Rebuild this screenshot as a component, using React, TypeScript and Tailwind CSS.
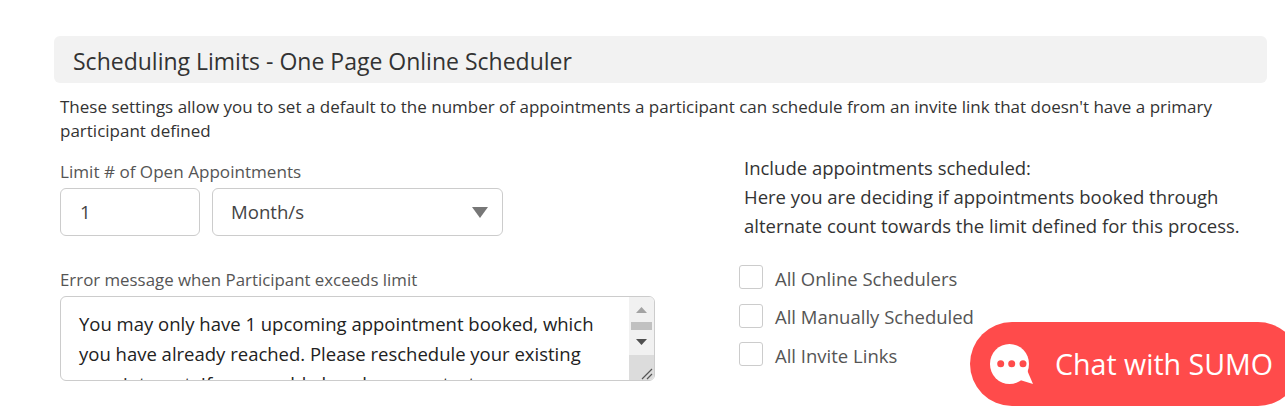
import React from 'react';

const font = { fontFamily: '"Open Sans", sans-serif' };

const ChatIcon = () => (
  <svg width="43" height="40" viewBox="0 0 43 40" className="shrink-0">
    <ellipse cx="19.500" cy="20" rx="19.500" ry="20" fill="#fff" />
    <path d="M37 26L43 40 30 36z" fill="#fff" />
    <circle cx="10.700" cy="19.700" r="3.500" fill="#ff4b4b" />
    <circle cx="21.700" cy="19.700" r="3.500" fill="#ff4b4b" />
    <circle cx="33" cy="19.700" r="3.500" fill="#ff4b4b" />
  </svg>
);

const checks = ['All Online Schedulers', 'All Manually Scheduled', 'All Invite Links'];

export default function App() {
  return (
    <div style={font} className="relative w-[1285px] h-[411px] overflow-hidden bg-white">
      <div className="pl-[54px] pr-[18px] pt-[36px]">
        <div className="h-[47px] flex items-center pl-[19px] pt-[3px] bg-[#f2f2f2] rounded-[6px] text-[23px] text-[#333]">
          Scheduling Limits - One Page Online Scheduler
        </div>
        <p className="ml-[6px] mt-[12px] w-[1180px] text-[17px] leading-[24px] text-[#333]">
          These settings allow you to set a default to the number of appointments a participant can schedule from an invite link that doesn't have a primary participant defined
        </p>
        <div className="flex mt-[17px]">
          <div className="ml-[6px] w-[684px]">
            <div className="text-[17.1px] leading-[24px] text-[#555]">Limit # of Open Appointments</div>
            <div className="flex gap-[12px] mt-[4px]">
              <div className="w-[140px] h-[48px] border border-[#ccc] rounded-[6px] flex items-center pl-[19px] text-[18.6px] text-[#444]">1</div>
              <div className="w-[291px] h-[48px] border border-[#ccc] rounded-[6px] flex items-center justify-between pl-[18px] pr-[14px] text-[18.6px] text-[#444]">
                Month/s
                <svg width="16" height="11" viewBox="0 0 16 11"><path d="M0 0h16l-8 11z" fill="#777" /></svg>
              </div>
            </div>
            <div className="mt-[32px] text-[16.85px] leading-[24px] text-[#555]">Error message when Participant exceeds limit</div>
            <div className="relative mt-[4px] w-[595px] h-[85px] border border-[#ccc] rounded-[6px] overflow-hidden">
              <div className="pl-[18px] pt-[12px] w-[555px] text-[18.5px] leading-[30px] text-[#222]">
                You may only have 1 upcoming appointment booked, which you have already reached. Please reschedule your existing appointment. If you would also please contact us
              </div>
              <div className="absolute right-0 top-0 bottom-0 w-[25px] flex flex-col items-center bg-[#f1f1f1]">
                <svg width="11" height="6" viewBox="0 0 11 6" className="mt-[10px] shrink-0"><path d="M0 6h11L5.500 0z" fill="#a3a3a3" /></svg>
                <div className="mt-[9px] w-[21px] h-[8px] bg-[#c1c1c1]" />
                <svg width="11" height="6" viewBox="0 0 11 6" className="mt-[9px] shrink-0"><path d="M0 0h11L5.500 6z" fill="#505050" /></svg>
                <div className="relative mt-auto w-[25px] h-[25px] bg-[#dcdcdc]">
                  <svg width="14" height="14" viewBox="0 0 14 14" className="absolute right-0 bottom-0"><path d="M2 13L12 3M7 13l5-5" stroke="#555" strokeWidth="1.200" fill="none" /></svg>
                </div>
              </div>
            </div>
          </div>
          <div className="flex-1 -mt-[7px]">
            <div className="text-[18.5px] leading-[29px] text-[#333]">
              Include appointments scheduled:
              <br />
              Here you are deciding if appointments booked through alternate count towards the limit defined for this process.
            </div>
            <div className="mt-[25px] -ml-[5px] flex flex-col gap-[14.500px]">
              {checks.map((c) => (
                <div key={c} className="flex items-center gap-[12px] h-[24px] text-[18.5px] text-[#555]">
                  <span className="w-[24px] h-[24px] border border-[#ccc] rounded-[3px] bg-white" />
                  <span className="pt-[3px]">{c}</span>
                </div>
              ))}
            </div>
          </div>
        </div>
      </div>
      <div className="absolute left-[970px] top-[322px] w-[330px] h-[84px] rounded-[42px] bg-[#ff4b4b] flex items-center pl-[20px] gap-[22px] text-white text-[28.6px]">
        <ChatIcon />
        <span className="whitespace-nowrap">Chat with SUMO</span>
      </div>
    </div>
  );
}
